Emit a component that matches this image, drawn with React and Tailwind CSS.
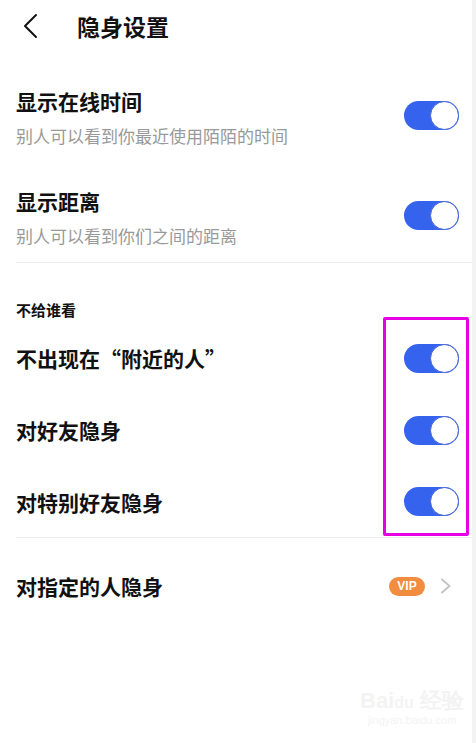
import React from "react";

const font = { fontFamily: '"Noto Sans CJK SC", "Noto Sans", sans-serif' };

function Toggle() {
  return (
    <div className="relative w-[55px] h-[29px] rounded-full bg-[#3563ee] shrink-0">
      <div className="absolute right-0 top-0 w-[29px] h-[29px] rounded-full bg-white border border-[#3d5fd6]" />
    </div>
  );
}

function SettingItem({ title, sub, first }) {
  return (
    <div className={`flex justify-between items-start ${first ? "" : "mt-[38px]"}`}>
      <div className="flex flex-col">
        <div className="h-[30px] leading-[30px] text-[21px] font-bold text-[#111]">{title}</div>
        <div className="mt-[8px] h-[24px] leading-[24px] text-[17px] text-[#999]">{sub}</div>
      </div>
      <div className="mt-[15px]">
        <Toggle />
      </div>
    </div>
  );
}

function ToggleRow({ title, h }) {
  return (
    <div className={`flex items-center justify-between ${h}`}>
      <div className="text-[21px] font-bold text-[#111] leading-[30px]">{title}</div>
      <Toggle />
    </div>
  );
}

export default function App() {
  return (
    <div className="relative flex w-[476px] h-[743px] bg-white overflow-hidden" style={font}>
      <div className="flex-1 flex flex-col">
        {/* Header */}
        <div className="h-[50px] flex items-center pl-[22px]">
          <svg width="16" height="26" viewBox="0 0 16 26" className="mt-[1px]">
            <path d="M14 2 L3 13 L14 24" fill="none" stroke="#111" strokeWidth="2" strokeLinecap="round" strokeLinejoin="round" />
          </svg>
          <div className="ml-[39px] text-[23px] font-bold text-[#111] leading-[30px] mt-[2px]">隐身设置</div>
        </div>

        {/* Section 1 */}
        <div className="pl-[16px] pr-[13px] pt-[36px] pb-[14px]">
          <SettingItem first title="显示在线时间" sub="别人可以看到你最近使用陌陌的时间" />
          <SettingItem title="显示距离" sub="别人可以看到你们之间的距离" />
        </div>
        <div className="ml-[16px] h-px bg-[#ededed]" />

        {/* Section 2 */}
        <div className="pl-[16px] pr-[13px] pt-[37px]">
          <div className="text-[15px] font-bold text-[#111] leading-[20px]">不给谁看</div>
          <div className="mt-[2px] flex flex-col">
            <ToggleRow title="不出现在“附近的人”" h="h-[72px]" />
            <ToggleRow title="对好友隐身" h="h-[72px]" />
            <ToggleRow title="对特别好友隐身" h="h-[71px]" />
          </div>
        </div>
        <div className="ml-[16px] h-px bg-[#ededed]" />

        {/* Section 3 */}
        <div className="pl-[16px] pr-[20px] h-[96px] flex items-center justify-between">
          <div className="text-[21px] font-bold text-[#111] leading-[30px]">对指定的人隐身</div>
          <div className="flex items-center">
            <div className="w-[36px] h-[19px] rounded-full bg-[#f28c3e] text-white text-[12px] font-bold flex items-center justify-center leading-none" style={{ fontFamily: '"Liberation Sans", Arial, sans-serif' }}>
              VIP
            </div>
            <svg width="12" height="16" viewBox="0 0 12 16" className="ml-[15px]">
              <path d="M2 1.5 L9.5 8 L2 14.5" fill="none" stroke="#c4c4c4" strokeWidth="2" strokeLinecap="round" strokeLinejoin="round" />
            </svg>
          </div>
        </div>
      </div>

      {/* right edge strip */}
      <div className="w-[4px] h-full bg-[#f3f3f3]" />

      {/* annotation rectangle */}
      <div className="absolute left-[383px] top-[317px] w-[86px] h-[219px] border-[3px] border-[#e600e6] rounded-[2px]" />

      {/* faint watermark */}
      <div className="absolute left-[360px] top-[690px] flex flex-col items-center text-[#f3f3f3] leading-none" style={{ fontFamily: '"Liberation Sans", Arial, sans-serif' }}>
        <div className="text-[22px] font-bold">Bai<span className="text-[16px]">du</span> 经验</div>
        <div className="text-[11px] mt-[3px]">jingyan.baidu.com</div>
      </div>
    </div>
  );
}
